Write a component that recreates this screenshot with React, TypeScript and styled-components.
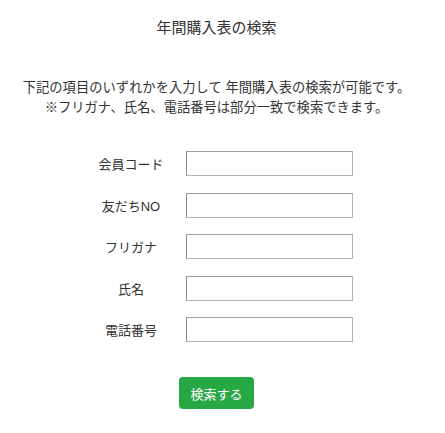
import styled, { createGlobalStyle } from "styled-components";

const GlobalStyle = createGlobalStyle`
    body {
        margin: 0;
        background: #ffffff;
        font-family: "Liberation Sans", "Noto Sans CJK JP", sans-serif;
        color: #333333;
    }
`;

const Wrapper = styled.div`
    width: 433px;
    padding-top: 17px;
    display: flex;
    flex-direction: column;
    align-items: center;
`;

const Title = styled.h1`
    margin: 0;
    font-size: 15px;
    font-weight: 400;
    line-height: 22px;
`;

const Description = styled.p`
    margin: 39px 0 0 0;
    font-size: 13.3px;
    line-height: 20px;
    text-align: center;
`;

const Form = styled.div`
    margin-top: 33px;
    padding-left: 6px;
    display: grid;
    grid-template-columns: 90px 167px;
    column-gap: 10px;
    row-gap: 16.6px;
    align-items: center;
`;

const Label = styled.label`
    font-size: 13px;
    text-align: center;
`;

const Input = styled.input`
    box-sizing: border-box;
    width: 167px;
    height: 25px;
    margin: 0;
    border: 1px solid #b4b4b4;
    border-left-color: #8f8f8f;
    border-top-color: #a0a0a0;
    border-radius: 0;
    padding: 2px 4px;
    font-size: 13px;
    background: #ffffff;
`;

const SubmitButton = styled.button`
    margin-top: 35px;
    height: 32px;
    padding: 0 11px;
    border: none;
    border-radius: 4px;
    background: #28a745;
    color: #ffffff;
    font-family: "Liberation Sans", "Noto Sans CJK JP", sans-serif;
    font-size: 13px;
    cursor: pointer;
`;

const fields = ["会員コード", "友だちNO", "フリガナ", "氏名", "電話番号"];

export default function App() {
    return (
        <>
            <GlobalStyle />
            <Wrapper>
                <Title>年間購入表の検索</Title>
                <Description>
                    下記の項目のいずれかを入力して 年間購入表の検索が可能です。<br />
                    ※フリガナ、氏名、電話番号は部分一致で検索できます。
                </Description>
                <Form>
                    {fields.map(field => (
                        <>
                            <Label key={field + "-label"}>{field}</Label>
                            <Input key={field + "-input"} type="text" />
                        </>
                    ))}
                </Form>
                <SubmitButton>検索する</SubmitButton>
            </Wrapper>
        </>
    );
}
